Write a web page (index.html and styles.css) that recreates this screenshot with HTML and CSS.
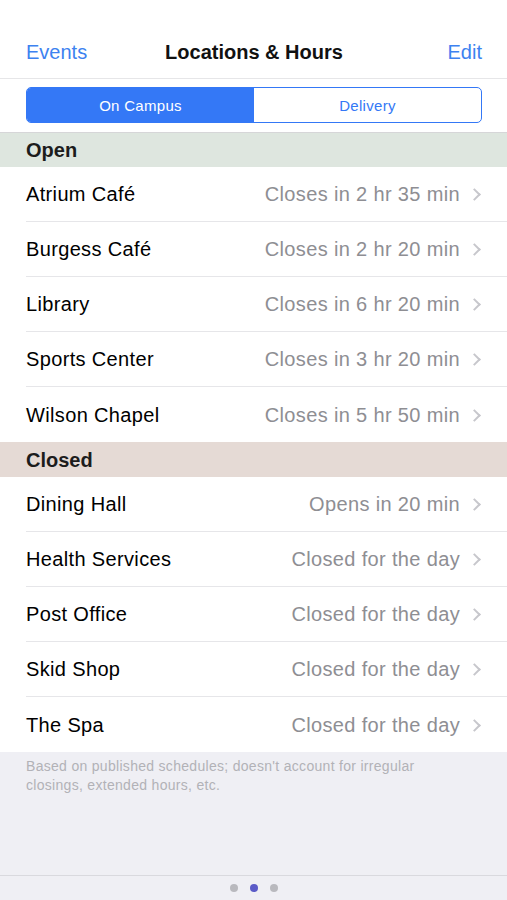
FILE: index.html
```
<!DOCTYPE html>
<html>

<head>
    <meta charset="utf-8">
    <title>Locations &amp; Hours</title>
    <meta name="viewport" content="width=device-width, initial-scale=1">
    <link rel="stylesheet" href="styles.css">
</head>

<body>
    <div class="screen">
        <div class="navbar">
            <span class="nav-link">Events</span>
            <span class="nav-title">Locations &amp; Hours</span>
            <span class="nav-link right">Edit</span>
        </div>
        <div class="segment-wrap">
            <div class="segment">
                <span class="seg active">On Campus</span>
                <span class="seg">Delivery</span>
            </div>
        </div>

        <div class="section open">Open</div>
        <ul class="list">
            <li><span class="name">Atrium Café</span><span class="detail">Closes in 2 hr 35 min</span><span class="chev"></span></li>
            <li><span class="name">Burgess Café</span><span class="detail">Closes in 2 hr 20 min</span><span class="chev"></span></li>
            <li><span class="name">Library</span><span class="detail">Closes in 6 hr 20 min</span><span class="chev"></span></li>
            <li><span class="name">Sports Center</span><span class="detail">Closes in 3 hr 20 min</span><span class="chev"></span></li>
            <li><span class="name">Wilson Chapel</span><span class="detail">Closes in 5 hr 50 min</span><span class="chev"></span></li>
        </ul>

        <div class="section closed">Closed</div>
        <ul class="list">
            <li><span class="name">Dining Hall</span><span class="detail">Opens in 20 min</span><span class="chev"></span></li>
            <li><span class="name">Health Services</span><span class="detail">Closed for the day</span><span class="chev"></span></li>
            <li><span class="name">Post Office</span><span class="detail">Closed for the day</span><span class="chev"></span></li>
            <li><span class="name">Skid Shop</span><span class="detail">Closed for the day</span><span class="chev"></span></li>
            <li><span class="name">The Spa</span><span class="detail">Closed for the day</span><span class="chev"></span></li>
        </ul>

        <div class="footer">
            <p>Based on published schedules; doesn't account for irregular closings, extended hours, etc.</p>
        </div>

        <div class="pager">
            <span class="dot"></span>
            <span class="dot current"></span>
            <span class="dot"></span>
        </div>
    </div>
</body>

</html>
```

FILE: styles.css
```
* {
    box-sizing: border-box;
}

html,
body {
    margin: 0;
    height: 100%;
}

body {
    font-family: "Liberation Sans", Arial, sans-serif;
    color: #000;
    background-color: #fff;
}

.screen {
    display: flex;
    flex-direction: column;
    height: 900px;
}

.navbar {
    display: grid;
    grid-template-columns: 1fr auto 1fr;
    align-items: center;
    height: 79px;
    padding: 26px 25px 0 26px;
    border-bottom: solid 1px #e6e6e8;
    font-size: 20px;
}

.nav-link {
    color: #3d82f0;
}

.nav-link.right {
    text-align: right;
}

.nav-title {
    font-weight: bold;
    color: #111;
}

.segment-wrap {
    padding: 8px 25px 9px 26px;
}

.segment {
    display: flex;
    height: 36px;
    border: solid 1px #3478f6;
    border-radius: 5px;
    overflow: hidden;
}

.seg {
    flex: 1;
    display: flex;
    align-items: center;
    justify-content: center;
    font-size: 15px;
    letter-spacing: 0.3px;
    color: #3478f6;
}

.seg.active {
    background-color: #3478f6;
    color: #fff;
}

.section {
    height: 35px;
    padding: 1px 26px 0;
    display: flex;
    align-items: center;
    font-size: 20px;
    font-weight: bold;
    color: #1c1c1c;
    border-top: solid 1px #d6d6d8;
}

.section.open {
    background-color: #dee6df;
}

.section.closed {
    background-color: #e5dad5;
    border-top: none;
}

.list {
    list-style: none;
    margin: 0;
    padding: 0 0 0 26px;
}

.list li {
    display: flex;
    align-items: center;
    height: 55px;
    padding: 1px 26px 0 0;
    border-bottom: solid 1px #e6e6e9;
    font-size: 20px;
    letter-spacing: 0.35px;
}

.list li:last-child {
    border-bottom: none;
}

.name {
    flex: 1;
    color: #000;
}

.detail {
    color: #8e8e93;
}

.chev {
    width: 9px;
    height: 9px;
    margin-left: 10px;
    margin-right: 2px;
    border-top: solid 2px #c7c7cc;
    border-right: solid 2px #c7c7cc;
    transform: rotate(45deg);
}

.footer {
    flex: 1;
    background-color: #efeff4;
    padding: 5px 26px 0;
}

.footer p {
    margin: 0;
    max-width: 430px;
    font-size: 14px;
    line-height: 19px;
    letter-spacing: 0.3px;
    color: #b2b2b7;
}

.pager {
    display: flex;
    justify-content: center;
    align-items: center;
    gap: 12px;
    height: 25px;
    background-color: #efeff4;
    border-top: solid 1px #d9d9de;
}

.dot {
    width: 8px;
    height: 8px;
    border-radius: 50%;
    background-color: #b9b9be;
}

.dot.current {
    background-color: #5b5bc7;
}
```
